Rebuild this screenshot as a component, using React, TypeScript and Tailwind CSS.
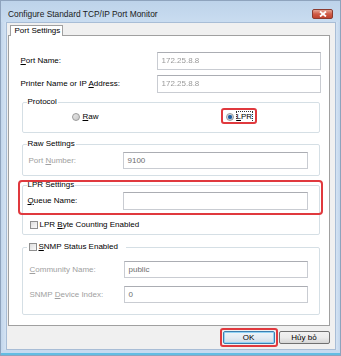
import React from "react";

const font = { fontFamily: '"Liberation Sans", Arial, sans-serif' };

function Input({ w, h = 18, value, blur, gray }: { w: number; h?: number; value?: string; blur?: boolean; gray?: boolean }) {
  return (
    <div
      className="flex items-center bg-white border border-[#c9ccd2] border-t-[#abadb3] pl-[4px] text-[8px] leading-[10px]"
      style={{ width: w, height: h }}
    >
      {value && (
        <span className={blur ? "blur-[0.7px] text-[#9a9a9a]" : gray ? "text-[#6d6d6d]" : "text-black"}>{value}</span>
      )}
    </div>
  );
}

function Radio({ checked }: { checked?: boolean }) {
  return (
    <span className="w-[8px] h-[8px] rounded-full border border-[#9a9a9a] bg-gradient-to-br from-[#e8e8e8] to-[#c8c8c8] flex items-center justify-center">
      {checked && <span className="w-[4px] h-[4px] rounded-full bg-[#1d5a9e] shadow-[0_0_1px_#5aa0e0]" />}
    </span>
  );
}

function Check() {
  return <span className="w-[8px] h-[8px] border border-[#8f8f8f] bg-gradient-to-br from-[#dedede] to-[#fafafa] shrink-0" />;
}

export default function App() {
  return (
    <div
      className="w-[341px] h-[356px] flex flex-col bg-[#c3d7ed] border border-[#8ea3bd] overflow-hidden text-black"
      style={font}
    >
      {/* title bar */}
      <div className="h-[21px] flex items-start pl-[7px] pr-[7px] pt-[8px] bg-gradient-to-b from-[#bdd3ea] to-[#c9dcf0] shrink-0">
        <span className="text-[8.4px] leading-[10px] text-[#1a1a1a]">Configure Standard TCP/IP Port Monitor</span>
        <div className="ml-auto w-[21px] h-[10px] rounded-[2px] border border-[#8b3b30] bg-gradient-to-b from-[#e6a596] via-[#cf5a46] to-[#c0432f] flex items-center justify-center">
          <svg width="8" height="6" viewBox="0 0 8 6">
            <path d="M1 0.5 L7 5.5 M7 0.5 L1 5.5" stroke="#fff" strokeWidth="1.8" />
          </svg>
        </div>
      </div>
      {/* middle */}
      <div className="flex flex-1">
        <div className="w-[5px] bg-gradient-to-r from-[#c2d6ec] to-[#d4e3f3]" />
        <div className="flex-1 bg-[#f0f0f0] border border-[#a8bdd6] flex flex-col pl-[1px] pr-[5px] pt-[2px]">
          {/* tab */}
          <div className="flex pl-[2px]">
            <div className="relative z-10 -mb-px h-[11px] bg-white border border-b-0 border-[#a0a0a0] pl-[4px] pr-[2px] text-[8px] leading-[10px]">
              Port Settings
            </div>
          </div>
          {/* panel */}
          <div className="bg-white border border-[#a0a0a0] flex flex-col pl-[12px] pr-[8px] pt-[16px] pb-[10px] text-[8px] leading-[10px]">
            <div className="flex items-center">
              <span className="w-[136px]"><u>P</u>ort Name:</span>
              <Input w={164} value="172.25.8.8" blur />
            </div>
            <div className="flex items-center mt-[5px]">
              <span className="w-[136px]">Printer Name or IP <u>A</u>ddress:</span>
              <Input w={164} value="172.25.8.8" blur />
            </div>

            {/* Protocol */}
            <fieldset className="mt-[4px] mx-[1px] border border-[#d5dfe5] rounded-[2px] pl-[4px] pt-[5px] pb-[10px]">
              <legend className="px-[1px] leading-[10px]">Protocol</legend>
              <div className="flex items-center h-[10px] pl-[45px]">
                <div className="flex items-center gap-[3px] w-[154px]">
                  <Radio />
                  <span><u>R</u>aw</span>
                </div>
                <div className="relative flex items-center gap-[3px]">
                  <Radio checked />
                  <span className="outline outline-1 outline-dotted outline-[#333]"><u>L</u>PR</span>
                  <span className="absolute -left-[5px] -top-[4px] w-[36px] h-[16px] border-2 border-[#e0393e] rounded-[3px]" />
                </div>
              </div>
            </fieldset>

            {/* Raw Settings */}
            <fieldset className="mt-[6px] mx-[1px] border border-[#d5dfe5] rounded-[2px] pl-[4px] pr-[10px] pt-[3px] pb-[6px]">
              <legend className="px-[1px] leading-[10px]">Raw Settings</legend>
              <div className="flex items-center">
                <span className="w-[96px] pl-[2px] text-[#a0a0a0]">Port <u>N</u>umber:</span>
                <Input w={185} h={17} value="9100" gray />
              </div>
            </fieldset>

            {/* LPR Settings */}
            <fieldset className="relative mt-[4px] mx-[1px] border border-[#d5dfe5] rounded-[2px] pl-[4px] pr-[10px] pt-[2px] pb-[4px]">
              <legend className="px-[1px] leading-[10px]">LPR Settings</legend>
              <div className="flex items-center">
                <span className="w-[96px] pl-[1px]"><u>Q</u>ueue Name:</span>
                <Input w={185} />
              </div>
              <div className="flex items-center gap-[1px] mt-[10px] h-[10px] pl-[3px]">
                <Check />
                <span className="ml-[1px]">LPR <u>B</u>yte Counting Enabled</span>
              </div>
              <span className="absolute -left-[5px] -top-[10px] w-[305px] h-[35px] border-2 border-[#e0393e] rounded-[4px]" />
            </fieldset>

            {/* SNMP */}
            <fieldset className="mt-[7px] mx-[1px] border border-[#d5dfe5] rounded-[2px] pl-[4px] pr-[10px] pt-[9px] pb-[11px]">
              <legend className="pl-[2px] pr-[8px] leading-[10px]">
                <span className="flex items-center gap-[2px]">
                  <Check />
                  <span><u>S</u>NMP Status Enabled</span>
                </span>
              </legend>
              <div className="flex items-center">
                <span className="w-[97px] pl-[3px] text-[#a0a0a0]"><u>C</u>ommunity Name:</span>
                <Input w={184} h={17} value="public" gray />
              </div>
              <div className="flex items-center mt-[8px]">
                <span className="w-[97px] pl-[3px] text-[#a0a0a0]">SNMP <u>D</u>evice Index:</span>
                <Input w={184} h={17} value="0" gray />
              </div>
            </fieldset>
          </div>

          {/* buttons */}
          <div className="flex justify-end gap-[4px] mt-[5px] text-[8px] leading-[10px]">
            <div className="relative">
              <div className="w-[52px] h-[13px] rounded-[2px] border border-[#3c7fb1] shadow-[inset_0_0_0_1px_#93d3f5] bg-gradient-to-b from-[#eef4f9] via-[#e3ebf3] to-[#cfdce8] flex items-center justify-center">
                OK
              </div>
              <span className="absolute -left-[3px] -top-[3px] w-[58px] h-[19px] border-2 border-[#e0393e] rounded-[3px]" />
            </div>
            <div className="w-[51px] h-[13px] rounded-[2px] border border-[#707070] bg-gradient-to-b from-[#f2f2f2] via-[#ebebeb] to-[#d6d6d6] flex items-center justify-center">
              Hủy bỏ
            </div>
          </div>
        </div>
        <div className="w-[5px] bg-gradient-to-l from-[#c2d6ec] to-[#d4e3f3]" />
      </div>
      <div className="h-[5px] bg-[#c6daef] border-b-2 border-[#62bde3] shrink-0" />
    </div>
  );
}
